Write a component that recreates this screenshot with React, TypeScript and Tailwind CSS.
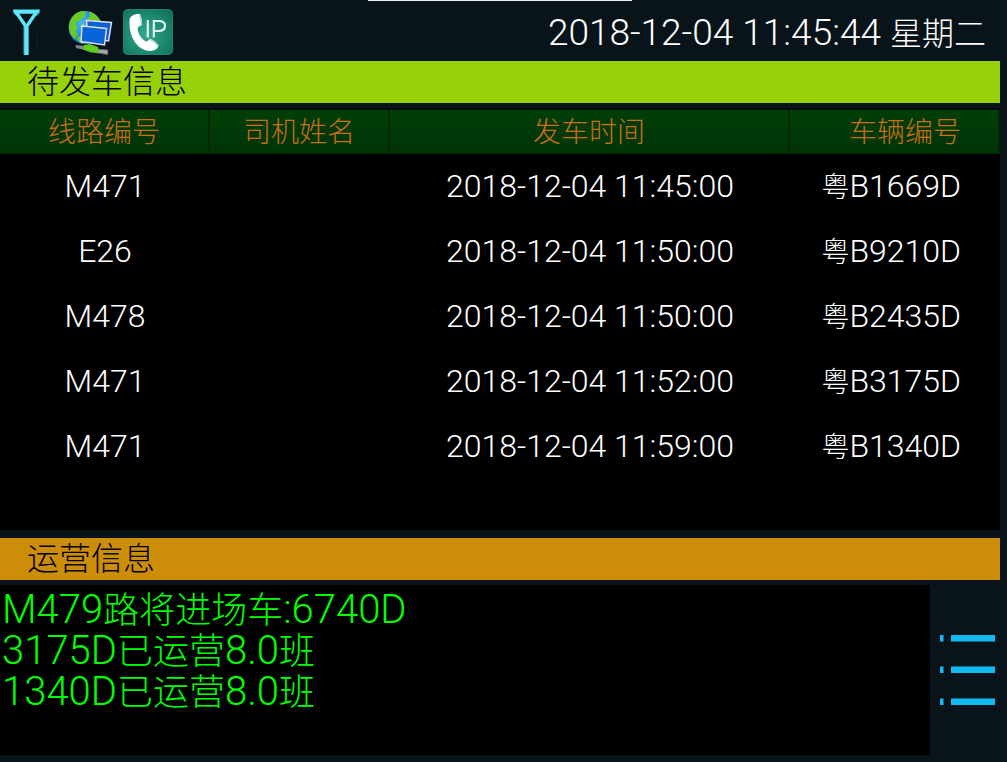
import type { ReactNode } from "react";

type Size = "md" | "lg" | "xl";

const latinSize: Record<Size, string> = {
  md: "text-[32px]",
  lg: "text-[37px]",
  xl: "text-[40px]",
};

const hanSize: Record<Size, string> = {
  md: "text-[28px]",
  lg: "text-[32px]",
  xl: "text-[36px]",
};

/** Sets digits and Latin letters slightly larger than the Chinese text beside them. */
function Mixed({ text, size }: { text: string; size: Size }) {
  const runs = text.match(/[\u4e00-\u9fff]+|[^\u4e00-\u9fff]+/g) ?? [];
  return (
    <>
      {runs.map((run, i) => (
        <span key={i} className={/[\u4e00-\u9fff]/.test(run) ? hanSize[size] : latinSize[size]}>
          {run}
        </span>
      ))}
    </>
  );
}

const departures = [
  { line: "M471", driver: "", time: "2018-12-04 11:45:00", plate: "粤B1669D" },
  { line: "E26", driver: "", time: "2018-12-04 11:50:00", plate: "粤B9210D" },
  { line: "M478", driver: "", time: "2018-12-04 11:50:00", plate: "粤B2435D" },
  { line: "M471", driver: "", time: "2018-12-04 11:52:00", plate: "粤B3175D" },
  { line: "M471", driver: "", time: "2018-12-04 11:59:00", plate: "粤B1340D" },
];

const messages = ["M479路将进场车:6740D", "3175D已运营8.0班", "1340D已运营8.0班"];

function AntennaIcon() {
  return (
    <svg viewBox="0 0 28 46" className="h-[46px] w-7" fill="none" aria-hidden="true">
      <path d="M0 0H27V4L24 7H3L0 4Z" fill="#1d7f8e" />
      <path d="M1 2.500H26" stroke="#5fe6f8" strokeWidth="3" />
      <path d="M3 3H23.500L13.300 18Z" fill="#081419" stroke="#5fe6f8" strokeWidth="3.400" />
      <path d="M13.200 17V46" stroke="#2a9fb0" strokeWidth="5.500" />
      <path d="M13.200 17V46" stroke="#5fe6f8" strokeWidth="3.800" />
      <path d="M24 26V40" stroke="#0c2930" strokeWidth="1" />
    </svg>
  );
}

function NetworkIcon() {
  return (
    <svg viewBox="0 0 46 46" className="h-[46px] w-[46px]" aria-hidden="true">
      <defs>
        <radialGradient id="sea" cx="40%" cy="35%" r="65%">
          <stop offset="0" stopColor="#45b4ff" />
          <stop offset="1" stopColor="#0872dc" />
        </radialGradient>
      </defs>
      <circle cx="17" cy="18.500" r="16.500" fill="url(#sea)" />
      <path d="M1 17C2 8 8 2 16 2L19 4L16 6L18 8L14 9L12 13L9 12L7 15L10 18L8 22L10 25L7 30C3 27 1 22 1 17Z" fill="#6acb25" />
      <path d="M21 2.500C27 4 31 8 33 13L28 13L25 11L21 13L19 10L22 7Z" fill="#6acb25" />
      <path d="M12 17L16 14L17 18L14 21Z" fill="#7fd93a" />
      <path d="M8 29L12 27L16 32L15 35C12 34 10 32 8 29Z" fill="#6acb25" />
      <path d="M7.500 36L17 37L17 41L8 39Z" fill="#84888c" />
      <path d="M27 40L40 41L39.500 45.500L27 43.500Z" fill="#a4a8ac" stroke="#63676b" strokeWidth=".8" />
      <path d="M16 36L22 35L30 38L31 44L23 43.500L15 40.500Z" fill="#5fce1e" />
      <path d="M18.500 11.500L43.500 13.500L40.500 32L20 29Z" fill="#0862d6" stroke="#ddd9f5" strokeWidth="1.500" />
      <path d="M14 17L38.500 19.500L36.500 36L13 32.500Z" fill="#0864d8" stroke="#ddd9f5" strokeWidth="1.500" />
    </svg>
  );
}

function IpPhoneIcon() {
  return (
    <svg viewBox="0 0 50 46" className="h-[46px] w-[50px]" aria-hidden="true">
      <defs>
        <radialGradient id="tile" cx="45%" cy="55%" r="70%">
          <stop offset="0" stopColor="#33a98f" />
          <stop offset="1" stopColor="#0d715b" />
        </radialGradient>
      </defs>
      <rect width="50" height="46" rx="5" fill="url(#tile)" />
      <rect x=".5" y=".5" width="49" height="45" rx="4.500" fill="none" stroke="#2a806c" />
      <path
        d="M7 9C8 7 11 5.500 14 5L17 5C18.500 8 19 12 19 16L16 17.500C14.500 18.500 14.500 20 15 22C16 26 18.500 29.500 22 32C23.500 33 24.500 32.500 25.500 31L27 30C30.500 31 33.500 33.500 35.500 36.500L34 39.500C31 42 27 42.500 23 41.500C12 38 6.500 26 6.500 15C6.500 12 6.500 10.500 7 9Z"
        fill="#fff"
      />
      <path d="M16.500 5.500C18 8.500 18.500 12 18.500 16M27.500 30.500C30.500 31.500 33 34 35 36.500" stroke="#a9d5ca" strokeWidth="1.600" fill="none" />
      <path d="M24.800 11V28.500" stroke="#e3f4ef" strokeWidth="2.200" />
      <path d="M30.800 28.500V12H35.500C40.500 12 42 14 42 16.800C42 20 39.500 22 35.500 22H31.500" stroke="#e3f4ef" strokeWidth="2.200" fill="none" />
    </svg>
  );
}

function ListIcon() {
  return (
    <svg viewBox="0 0 56 70" className="h-[70px] w-14" fill="#12bbef" aria-hidden="true">
      <path d="M0 0h3.500v6.500h-3.500zM11 0h44v6.500h-44z" />
      <path d="M0 31.500h3.500v6.500h-3.500zM11 31.500h44v6.500h-44z" />
      <path d="M0 63.500h3.500v6.500h-3.500zM11 63.500h44v6.500h-44z" />
    </svg>
  );
}

function SectionTitle({ className, children }: { className: string; children: ReactNode }) {
  return (
    <h2 className={`mr-[7px] flex h-[42px] shrink-0 items-center pl-[27px] text-[32px] font-light text-black ${className}`}>
      {children}
    </h2>
  );
}

const headCell =
  "h-11 border-r-2 border-b border-r-[#002702] border-b-[#022604] p-0 pt-[3px] text-[28px] leading-none font-light text-[#c96e14]";

export default function App() {
  return (
    <div className="flex min-h-screen flex-col bg-[#081419] font-['Roboto','Noto_Sans_CJK_SC',sans-serif] font-light text-white">
      <div className="mr-[7px] flex shrink-0 justify-center">
        <div className="h-px w-[264px] bg-[#eeeeee]" />
      </div>
      <header className="flex h-[60px] shrink-0 items-center justify-between pt-[2px] pr-[21px] pl-[13px]">
        <div className="flex items-center">
          <AntennaIcon />
          <div className="ml-[27px]">
            <NetworkIcon />
          </div>
          <div className="ml-[9px]">
            <IpPhoneIcon />
          </div>
        </div>
        <time className="leading-none whitespace-nowrap" dateTime="2018-12-04T11:45:44">
          <Mixed text="2018-12-04 11:45:44 星期二" size="lg" />
        </time>
      </header>

      <main className="flex flex-1 flex-col">
        <SectionTitle className="bg-[#96d10a]">待发车信息</SectionTitle>

        <section className="mt-[5px] mr-[7px] flex-1 border-t-2 border-b-2 border-t-[#030b0c] border-b-[#061312] bg-black">
          <table className="w-full table-fixed border-separate border-spacing-0">
            <colgroup>
              <col className="w-[21%]" />
              <col className="w-[18%]" />
              <col className="w-[40%]" />
              <col className="w-[21%]" />
            </colgroup>
            <thead className="bg-linear-to-b from-[#003f08] to-[#003407]">
              <tr>
                <th className={headCell}>线路编号</th>
                <th className={headCell}>司机姓名</th>
                <th className={headCell}>发车时间</th>
                <th className={headCell}>
                  <div className="pr-[37px] text-right">车辆编号</div>
                </th>
              </tr>
            </thead>
            <tbody>
              {departures.map((d, i) => (
                <tr key={i} className="h-[65px] leading-none whitespace-nowrap">
                  <td className="p-0 pb-[2px] text-center">
                    <Mixed text={d.line} size="md" />
                  </td>
                  <td className="p-0 pb-[2px] text-center">{d.driver}</td>
                  <td className="p-0 pb-[2px] text-center">
                    <Mixed text={d.time} size="md" />
                  </td>
                  <td className="p-0 pr-[39px] pb-[2px] text-right">
                    <Mixed text={d.plate} size="md" />
                  </td>
                </tr>
              ))}
            </tbody>
          </table>
        </section>

        <SectionTitle className="mt-[6px] bg-[#cc8d08]">运营信息</SectionTitle>

        <section className="mt-[5px] mb-[7px] flex h-[170px] shrink-0">
          <div className="flex-1 bg-black pt-1 pl-[2px] text-[#00ff00]">
            {messages.map((m) => (
              <p key={m} className="h-[41px] leading-[41px] whitespace-nowrap">
                <Mixed text={m} size="xl" />
              </p>
            ))}
          </div>
          <button type="button" aria-label="菜单" className="flex w-[77px] items-center pl-[10px]">
            <ListIcon />
          </button>
        </section>
      </main>
    </div>
  );
}
